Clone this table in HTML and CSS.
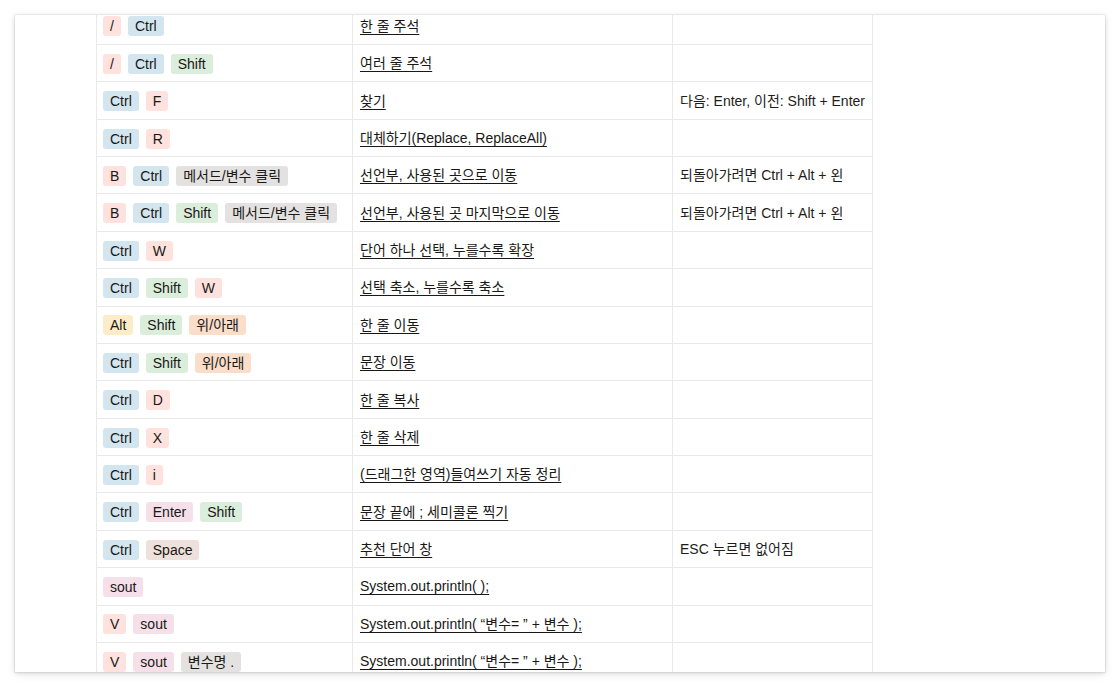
FILE: index.html
```html
<!DOCTYPE html>
<html lang="ko">
<head>
<meta charset="utf-8">
<link rel="stylesheet" href="styles.css">
</head>
<body>
<div class="card">
  <div class="scroller">
    <table class="shortcuts">
      <colgroup><col class="c1"><col class="c2"><col class="c3"></colgroup>
      <tbody>
        <tr><td><span class="tag red">/</span><span class="tag blue">Ctrl</span></td><td><u>한 줄 주석</u></td><td></td></tr>
        <tr><td><span class="tag red">/</span><span class="tag blue">Ctrl</span><span class="tag green">Shift</span></td><td><u>여러 줄 주석</u></td><td></td></tr>
        <tr><td><span class="tag blue">Ctrl</span><span class="tag red">F</span></td><td><u>찾기</u></td><td>다음: Enter, 이전: Shift + Enter</td></tr>
        <tr><td><span class="tag blue">Ctrl</span><span class="tag red">R</span></td><td><u>대체하기(Replace, ReplaceAll)</u></td><td></td></tr>
        <tr><td><span class="tag red">B</span><span class="tag blue">Ctrl</span><span class="tag gray">메서드/변수 클릭</span></td><td><u>선언부, 사용된 곳으로 이동</u></td><td>되돌아가려면 Ctrl + Alt + 왼</td></tr>
        <tr><td><span class="tag red">B</span><span class="tag blue">Ctrl</span><span class="tag green">Shift</span><span class="tag gray">메서드/변수 클릭</span></td><td><u>선언부, 사용된 곳 마지막으로 이동</u></td><td>되돌아가려면 Ctrl + Alt + 왼</td></tr>
        <tr><td><span class="tag blue">Ctrl</span><span class="tag red">W</span></td><td><u>단어 하나 선택, 누를수록 확장</u></td><td></td></tr>
        <tr><td><span class="tag blue">Ctrl</span><span class="tag green">Shift</span><span class="tag red">W</span></td><td><u>선택 축소, 누를수록 축소</u></td><td></td></tr>
        <tr><td><span class="tag yellow">Alt</span><span class="tag green">Shift</span><span class="tag orange">위/아래</span></td><td><u>한 줄 이동</u></td><td></td></tr>
        <tr><td><span class="tag blue">Ctrl</span><span class="tag green">Shift</span><span class="tag orange">위/아래</span></td><td><u>문장 이동</u></td><td></td></tr>
        <tr><td><span class="tag blue">Ctrl</span><span class="tag red">D</span></td><td><u>한 줄 복사</u></td><td></td></tr>
        <tr><td><span class="tag blue">Ctrl</span><span class="tag red">X</span></td><td><u>한 줄 삭제</u></td><td></td></tr>
        <tr><td><span class="tag blue">Ctrl</span><span class="tag red">i</span></td><td><u>(드래그한 영역)들여쓰기 자동 정리</u></td><td></td></tr>
        <tr><td><span class="tag blue">Ctrl</span><span class="tag pink">Enter</span><span class="tag green">Shift</span></td><td><u>문장 끝에 ; 세미콜론 찍기</u></td><td></td></tr>
        <tr><td><span class="tag blue">Ctrl</span><span class="tag brown">Space</span></td><td><u>추천 단어 창</u></td><td>ESC 누르면 없어짐</td></tr>
        <tr><td><span class="tag pink">sout</span></td><td><u>System.out.println( );</u></td><td></td></tr>
        <tr><td><span class="tag red">V</span><span class="tag pink">sout</span></td><td><u>System.out.println( “변수= ” + 변수 );</u></td><td></td></tr>
        <tr><td><span class="tag red">V</span><span class="tag pink">sout</span><span class="tag gray">변수명 .</span></td><td><u>System.out.println( “변수= ” + 변수 );</u></td><td></td></tr>
        <tr><td></td><td></td><td></td></tr>
      </tbody>
    </table>
  </div>
</div>
</body>
</html>
```
FILE: styles.css
```css
html, body {
  margin: 0;
  padding: 0;
  background: #ffffff;
}

body {
  font-family: "Liberation Sans", "Noto Sans CJK KR", sans-serif;
  font-size: 14px;
  color: rgb(30, 29, 27);
}

.card {
  margin: 15px;
  width: 1090px;
  height: 657px;
  background: #fff;
  overflow: hidden;
  box-shadow: 0 0 0 1px rgba(15, 15, 15, 0.05), 0 1px 4px rgba(15, 15, 15, 0.14), 0 3px 10px rgba(15, 15, 15, 0.07);
}

.scroller {
  padding-left: 81px;
}

.shortcuts {
  margin-top: -8.4px;
  border-collapse: collapse;
  table-layout: fixed;
  width: 777px;
}

.c1 { width: 256px; }
.c2 { width: 320px; }
.c3 { width: 200px; }

.shortcuts tr {
  height: 37.375px;
}

.shortcuts td {
  border: 1px solid rgb(233, 233, 231);
  padding: 0 7px;
  vertical-align: middle;
  white-space: nowrap;
  line-height: 20px;
}

.shortcuts td:first-child {
  padding-left: 6px;
}

.shortcuts u {
  text-decoration: underline;
  text-decoration-thickness: 1px;
  text-underline-offset: 3px;
  color: rgb(25, 24, 22);
}

.tag {
  display: inline-block;
  height: 20px;
  line-height: 20px;
  padding: 0 7px;
  border-radius: 3px;
  margin-right: 7px;
  vertical-align: middle;
  color: rgb(25, 24, 22);
}

.red { background: rgb(255, 226, 221); }
.blue { background: rgb(211, 229, 239); }
.green { background: rgb(219, 237, 219); }
.gray { background: rgb(227, 226, 224); }
.yellow { background: rgb(253, 236, 200); }
.orange { background: rgb(250, 222, 201); }
.pink { background: rgb(245, 224, 233); }
.brown { background: rgb(238, 224, 218); }
```
